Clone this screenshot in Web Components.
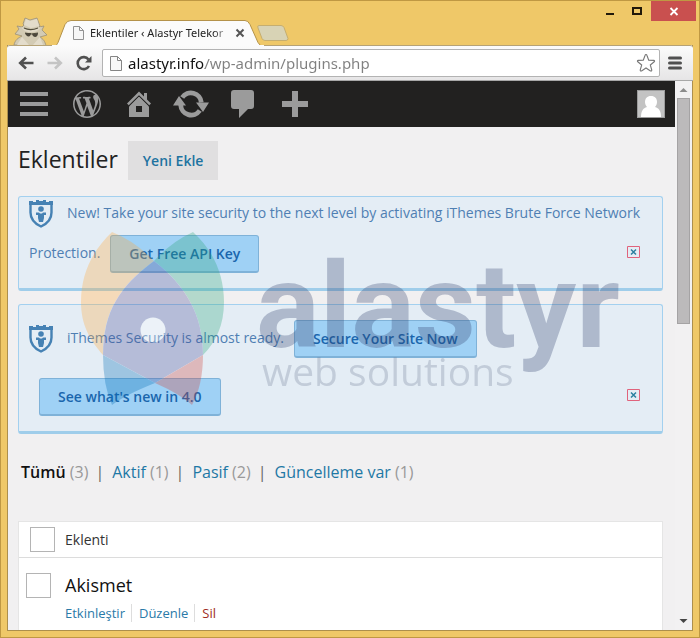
<!DOCTYPE html>
<html lang="tr">
<head>
<meta charset="utf-8">
<title>Eklentiler ‹ Alastyr Telekom</title>
<style>
html,body{margin:0;height:100%}
body{font-family:"Open Sans","Noto Sans",sans-serif;font-size:14px;color:#222;overflow:hidden}
</style>
</head>
<body>
<browser-window>
  <tab-strip slot="tabs" label="Eklentiler ‹ Alastyr Telekor"></tab-strip>
  <address-bar slot="toolbar" value="alastyr.info/wp-admin/plugins.php"></address-bar>
  <admin-bar></admin-bar>
  <page-heading action="Yeni Ekle">Eklentiler</page-heading>
  <notice-list>
    <security-notice>New! Take your site security to the next level by activating iThemes Brute Force Network Protection.<notice-button slot="actions">Get Free API Key</notice-button></security-notice>
    <security-notice>iThemes Security is almost ready.<notice-button slot="actions">Secure Your Site Now</notice-button><notice-button slot="actions">See what's new in 4.0</notice-button></security-notice>
  </notice-list>
  <status-filter></status-filter>
  <plugin-table></plugin-table>
</browser-window>

<script>
function define(name, html, setup) {
  const template = document.createElement('template');
  template.innerHTML = html;
  customElements.define(name, class extends HTMLElement {
    constructor() {
      super();
      this.attachShadow({mode: 'open'}).append(template.content.cloneNode(true));
    }
    connectedCallback() { if (setup) setup(this, this.shadowRoot); }
  });
}

define('browser-window', `
<style>
:host{display:flex;flex-direction:column;height:100vh;box-sizing:border-box;background:#efc868;border:1px solid #bf9843;padding:0 6px 6px}
.frame{flex:1;min-height:0;display:flex;flex-direction:column;border:1px solid #ac8f4d;border-top:0;background:#f1f0f1}
.view{flex:1;min-height:0;display:flex}
main{flex:1;min-width:0;overflow:hidden;position:relative}
</style>
<slot name="tabs"></slot>
<div class="frame">
  <slot name="toolbar"></slot>
  <div class="view"><main><slot></slot></main><scroll-track></scroll-track></div>
</div>`);

define('tab-strip', `
<style>
:host{display:flex;align-items:flex-end;height:44px;box-sizing:border-box}
.spy{width:38px;height:28px;margin-left:3px;flex:none}
.tab{position:relative;width:212px;height:26px;margin:0 0 -1px 4px;flex:none;z-index:1}
.shape{position:absolute;inset:0}
.in{position:relative;display:flex;align-items:center;height:26px;padding:0 18px 0 21px}
.title{flex:1;overflow:hidden;white-space:nowrap;font:11px "Noto Sans","Open Sans",sans-serif;color:#222;margin-left:6px;border:0;background:none;padding:0;text-align:left;line-height:24px;-webkit-mask:linear-gradient(90deg,#000 calc(100% - 16px),transparent)}
button{border:0;background:none;padding:0;display:block}
.x{width:12px;height:12px;margin-left:4px}
.new{width:32px;height:16px;margin:0 0 4px -7px}
.win{margin-left:auto;align-self:flex-start;display:flex;margin-right:-3px}
.win button{height:20px;width:27px}
.win .close{width:45px;background:#c9504f}
svg{display:block}
</style>
<svg class="spy" viewBox="0 0 38 28">
  <path d="M4 28c1-5 4-7 8-9L5 17l4-5-2-3 5 1 2-2-1-1 2-6 5 2 7-2 3 8-1 1 5-1-2 4 5 5-7 2c3 2 5 4 6 9z" fill="#d3cbb4" stroke="#9a917a" stroke-width=".8"/>
  <path d="M14 8l2-6 4 2 7-2 2 7-8 2z" fill="#e3dccb"/>
  <path d="M12 20l7 8H7zM30 20l-7 8h10z" fill="#e3dccb"/>
  <path d="M11 10c6 3 13 3 20 0-3 4-5 5-10 5s-8-2-10-5z" fill="#e0d9c7"/>
  <path d="M14 11c4 2 9 2 14 0M15 16l6 1 7-1" fill="none" stroke="#55503f" stroke-width="1.2"/>
  <path d="M15 16h6c0 5-5 4-6 0zM22 17l6-1c0 5-5 5-6 1z" fill="#4c473b"/>
</svg>
<div class="tab">
  <svg class="shape" width="212" height="26" viewBox="0 0 212 26">
    <path d="M0 26c4 0 5-2 6-4L13 4q2-4 6-4h174q3 0 5 4l8 18q2 4 6 4z" fill="#fbfbfb" transform="translate(0 .5)" stroke="#b4924a"/>
    <path d="M0 25h212v1H0z" fill="#fbfbfb"/>
  </svg>
  <div class="in">
    <svg width="11" height="14" viewBox="0 0 11 14"><path d="M.5.5h6l4 4v9H.5zM6.500.5v4h4" fill="#f6f6f6" stroke="#929292"/></svg>
    <button class="title"></button>
    <button class="x" aria-label="Kapat"><svg width="12" height="12"><path d="M2.500 2.500l7 7m0-7l-7 7" stroke="#555" stroke-width="2"/></svg></button>
  </div>
</div>
<button class="new" aria-label="Yeni sekme"><svg width="32" height="16"><path d="M2 .5h22q2 0 3 2l4 11q0 2-2 2H8q-2 0-3-2L1 3Q0 .5 2 .5z" fill="#d8d3b5" stroke="#c5ae70"/></svg></button>
<div class="win">
  <button aria-label="Küçült"><svg width="27" height="20"><path d="M9 12h8v2H9z" fill="#22190a"/></svg></button>
  <button aria-label="Büyüt"><svg width="27" height="20"><path d="M9 7h8v6H9z" fill="none" stroke="#22190a" stroke-width="2"/><path d="M8 6h10v2H8z" fill="#22190a"/></svg></button>
  <button class="close" aria-label="Pencereyi kapat"><svg width="45" height="20"><path d="M19.500 7l7 7m0-7l-7 7" stroke="#fff" stroke-width="1.800"/></svg></button>
</div>`, (el, root) => { root.querySelector('.title').textContent = el.getAttribute('label'); });

define('address-bar', `
<style>
:host{display:flex;align-items:center;height:36px;box-sizing:border-box;padding:0 9px 0 11px;background:linear-gradient(#fbfbfb,#e6e5e6);border-top:1px solid #b5a276;border-bottom:1px solid #a8a8a8;margin:0 -1px;border-radius:3px 3px 0 0}
button{border:0;padding:0;background:none;display:block;width:16px;height:16px;margin-right:13px}
.box{flex:1;display:flex;align-items:center;height:28px;box-sizing:border-box;border:1px solid #b3b3b3;border-radius:2px;background:#fff;padding:0 3px 0 7px;margin:0 8px 0 -3px}
input{flex:1;min-width:0;border:0;padding:0;margin:0 0 0 6px;outline:0;font:15px/24px "Noto Sans","Open Sans",sans-serif;color:transparent;background:linear-gradient(90deg,#111 77px,#808080 77px);-webkit-background-clip:text;background-clip:text}
.box button,.menu{margin:0}
.box button{width:20px;height:20px}
svg{display:block}
</style>
<button aria-label="Geri"><svg width="16" height="16"><path d="M15.500 8H2m6-5.500L2.200 8 8 13.500" fill="none" stroke="#505050" stroke-width="2.600"/></svg></button>
<button aria-label="İleri"><svg width="16" height="16"><path d="M.5 8H14M8 2.500L13.800 8 8 13.500" fill="none" stroke="#c4c4c4" stroke-width="2.600"/></svg></button>
<button aria-label="Yenile"><svg width="16" height="16"><path d="M13 11a6 6 0 1 1-.5-6.500" fill="none" stroke="#505050" stroke-width="2.600"/><path d="M15.500 1v6.500H9z" fill="#505050"/></svg></button>
<div class="box">
  <svg width="12" height="15"><path d="M.5.5h7l4 4v10H.5zM7.500.5v4h4" fill="#f8f8f8" stroke="#858585"/></svg>
  <input aria-label="Adres" spellcheck="false">
  <button aria-label="Yer imi"><svg width="20" height="20" viewBox="0 0 20 20"><path d="M10 1.500q.7 0 1 1l1.700 4.700 5 .2q1.500.3.500 1.400L14.300 12l1.500 5q0 1.500-1.300.9L10 15l-4.500 2.900q-1.300.6-1.300-.9l1.500-5-3.900-3.200q-1-1.100.5-1.400l5-.2L9 2.500q.3-1 1-1z" fill="#fff" stroke="#777" stroke-width="1.100"/></svg></button>
</div>
<button class="menu" aria-label="Menü"><svg width="14" height="16"><path d="M1.500 3h11M1.500 8h11M1.500 13h11" stroke="#505050" stroke-width="3" stroke-linecap="round"/></svg></button>`,
(el, root) => { root.querySelector('input').value = el.getAttribute('value'); });

define('scroll-track', `
<style>
:host{display:flex;flex-direction:column;width:17px;background:#f2f1f2;padding-top:5px;box-sizing:border-box;align-items:center}
.thumb{box-sizing:border-box;width:13px;height:226px;background:#bcbabb;border:1px solid #a5a3a4;margin-top:5px}
.end{margin-top:auto;margin-bottom:6px}
svg{display:block}
</style>
<svg width="9" height="7"><path d="M.5 6L4.500 2l4 4z" fill="#8c8c8c"/></svg>
<div class="thumb"></div>
<svg class="end" width="9" height="7"><path d="M.5 2h8l-4 4z" fill="#444"/></svg>`);

define('admin-bar', `
<style>
:host{display:flex;align-items:center;height:46px;padding:0 10px 0 1px;background:#222120}
button{border:0;padding:0;background:none;width:52px;height:46px;display:flex;align-items:center;justify-content:center;color:#9b9b9b}
button:first-of-type{width:50px;margin-right:2px}
.me{margin-left:auto;width:28px}
svg{display:block;fill:currentColor}
</style>
<button aria-label="Menü"><svg width="28" height="24"><path d="M0 0h28v4H0zM0 10h28v4H0zM0 20h28v4H0z"/></svg></button>
<button aria-label="WordPress"><svg width="28" height="28" viewBox="0 0 20 20"><path d="M20 10c0-5.510-4.490-10-10-10C4.480 0 0 4.490 0 10c0 5.520 4.480 10 10 10 5.510 0 10-4.480 10-10zM7.780 15.370L4.370 6.220c.55-.02 1.170-.08 1.170-.08.5-.06.44-1.130-.06-1.110 0 0-1.450.11-2.370.11-.18 0-.37 0-.58-.01C4.120 2.690 6.870 1.110 10 1.110c2.330 0 4.450.87 6.050 2.340-.68-.11-1.650.39-1.650 1.580 0 .74.45 1.360.9 2.100.35.61.55 1.360.55 2.460 0 1.490-1.400 5-1.400 5l-3.030-8.370c.54-.02.82-.17.82-.17.5-.05.44-1.250-.06-1.220 0 0-1.440.12-2.380.12-.87 0-2.330-.12-2.330-.12-.5-.03-.56 1.200-.06 1.220l.92.08 1.260 3.410zM17.410 10c.24-.64.74-1.870.43-4.250.7 1.290 1.050 2.710 1.050 4.250 0 3.290-1.730 6.240-4.400 7.780.97-2.590 1.940-5.200 2.920-7.780zM6.100 18.090C3.120 16.650 1.110 13.530 1.110 10c0-1.300.23-2.480.72-3.590C3.250 10.300 4.670 14.200 6.100 18.090zm4.030-6.630l2.580 6.980c-.86.29-1.760.45-2.710.45-.79 0-1.570-.11-2.290-.33.81-2.380 1.620-4.740 2.420-7.100z"/></svg></button>
<button aria-label="Site"><svg width="24" height="26" viewBox="0 0 24 26"><path d="M0 12.500L12 .5l5 5V2h3v6.500l4 4-2 2-10-10-10 10z"/><path d="M2 15.500l10-10 10 10V26H2z"/><path d="M9 15h6v6H9z" fill="#222120"/><path d="M1.800 14.800l10.200-10 10.200 10" fill="none" stroke="#222120" stroke-width="1"/></svg></button>
<button aria-label="Güncellemeler"><svg width="36" height="28" viewBox="0 0 36 28"><path d="M9.200 7.500A10.500 10.500 0 0 1 28.300 12.500M26.800 20.500A10.500 10.500 0 0 1 7.700 15" fill="none" stroke="#9b9b9b" stroke-width="4.800"/><path d="M0 15.500L6 6l7 9.500zM23 12.500h13L30 22z"/></svg></button>
<button aria-label="Yorumlar"><svg width="24" height="28" viewBox="0 0 24 28"><path d="M3 0h17q3 0 3 3v13q0 3-3 3h-3l-9 9v-9H3q-3 0-3-3V3q0-3 3-3z"/></svg></button>
<button aria-label="Yeni"><svg width="26" height="26"><path d="M10 0h6v10h10v6H16v10h-6V16H0v-6h10z"/></svg></button>
<button class="me" aria-label="Hesabım"><svg width="28" height="28"><path d="M0 0h28v28H0z" fill="#9c9c9c"/><path d="M1 1h26v26H1z" fill="#c3c3c3"/><path d="M14 6c4 0 6 2.600 6 6 0 2-1 4-2 5 4 1 6 4 6 10H4c0-6 2-9 6-10-1-1-2-3-2-5 0-3.400 2-6 6-6z" fill="#fff"/></svg></button>`);

define('page-heading', `
<style>
:host{display:flex;align-items:center;padding:14px 10px 16px}
h1{margin:0 0 3px;font-size:23px;line-height:36px;font-weight:400;color:#222}
button{margin-left:10px;border:0;background:#e0dfe0;color:#1e73a0;font:600 14px "Open Sans",sans-serif;height:39px;padding:0 15px}
</style><h1><slot></slot></h1><button></button>`,
(el, root) => { root.querySelector('button').textContent = el.getAttribute('action'); });

define('notice-list', `
<style>
:host{display:grid;gap:13px;position:relative;padding:0 12px 0 10px}
.mark{position:absolute;left:70px;top:32px;pointer-events:none}
</style>
<slot></slot><brand-mark class="mark"></brand-mark>`);

define('brand-mark', `
<style>:host{display:block;opacity:.3}svg{display:block}</style>
<svg width="550" height="180" viewBox="78 228 550 180">
  <path d="M112 232Q135 241 154 261C120 286 103 311 103 355C90 340 81 325 81 302C81 273 93 250 112 232z" fill="#ffa93a"/>
  <path d="M193 232Q171 242 154 261C185 285 203 314 203 355C216 342 224 325 224 302C224 273 212 249 193 232z" fill="#2ba679"/>
  <path d="M154 261C185 285 203 314 203 355L155 383L103 355C103 311 120 286 154 261z" fill="#4a4f98"/>
  <path d="M103 355L155 383Q125 395 112 405Q103 385 103 355z" fill="#006cb4"/>
  <path d="M203 355L155 383Q180 394 192 405Q203 385 203 355z" fill="#d04038"/>
  <circle cx="153" cy="330" r="12.500" fill="#fff"/>
  <text x="256" y="347" font-family="Roboto,sans-serif" font-weight="700" font-size="119" fill="#33436f">alastyr</text>
  <text x="262" y="386" font-family="Open Sans,sans-serif" font-size="39" fill="#75819a">web solutions</text>
</svg>`);

define('security-notice', `
<style>
:host{display:block;box-sizing:border-box;border:1px solid #a3d0ef;border-bottom:3px solid #9fcdea;border-radius:3px;background:#e4edf5;padding:5px 10px;line-height:22px;color:#4f7fb3}
.icon{display:inline-block;vertical-align:middle;margin:-3px 14px -3px 0}
.x{float:right;margin:21px 12px 0 0;width:13px;height:12px;border:0;padding:0;background:none}
.x svg{display:block}
</style>
<svg class="icon" width="24" height="28" viewBox="0 0 24 28"><path d="M1.500 3.500h21v9c0 7-4 11-10.500 14C5.500 23.500 1.500 19.500 1.500 12.500z" fill="none" stroke="#4682b4" stroke-width="2.400"/><path d="M0 1h4v1h3V0h3v1h4V0h3v2h3V1h4v4H0z" fill="#4682b4"/><circle cx="12" cy="9" r="2.800" fill="#4682b4"/><path d="M7 12.500h3l1 1h2l1-1h3v2.500h-2V18l-1 4h-4l-1-4v-3H7z" fill="#4682b4"/></svg><slot></slot><slot name="actions"></slot><button class="x" aria-label="Kapat"><svg width="13" height="12"><path d="M.5.5h12v11H.5z" fill="none" stroke="#e0637c"/><path d="M4 3.500l5 5m0-5l-5 5" stroke="#2a80a0" stroke-width="1.500"/></svg></button>`);

define('notice-button', `
<style>
:host{display:inline-block;vertical-align:middle;margin:10px 0 10px 10px}
button{box-sizing:border-box;height:38px;padding:0 18px;border:1px solid #7fb2d8;border-bottom-width:2px;border-radius:3px;background:#9fd1f5;color:#1a66ad;font:600 14px "Open Sans",sans-serif;display:block;white-space:nowrap}
</style><button><slot></slot></button>`);

define('status-filter', `
<style>
:host{display:flex;padding:26px 13px 0;font-size:16px;line-height:24px;color:#555}
a{color:#1e78a5;text-decoration:none}
.on{color:#111;font-weight:600}
i{font-style:normal;color:#999}
b{font-weight:400;margin:0 8px 0 7px;color:#666}
</style>
<span><a class="on" href="#all">Tümü</a> <i>(3)</i></span><b>|</b><span><a href="#active">Aktif</a> <i>(1)</i></span><b>|</b><span><a href="#inactive">Pasif</a> <i>(2)</i></span><b>|</b><span><a href="#upgrade">Güncelleme var</a> <i>(1)</i></span>`);

define('plugin-table', `
<style>
:host{display:block;padding:37px 12px 0 10px}
table{width:100%;border-collapse:separate;border-spacing:0;background:#fff;border:1px solid #e5e5e5;border-bottom:0}
th,td{padding:0;text-align:left;font-weight:400;vertical-align:top}
thead th{height:35px;border-bottom:1px solid #dcdcdc;vertical-align:middle;color:#333}
.c{width:46px}
input{appearance:none;box-sizing:border-box;display:block;width:25px;height:25px;margin:0 0 0 11px;border:1px solid #b4b4b4;background:#fff}
tbody input{margin:15px 0 0 7px}
strong{display:block;font-weight:400;font-size:18px;line-height:24px;margin-top:15px;color:#111}
.links{display:flex;font-size:13px;line-height:18px;margin:7px 0 80px}
a{color:#2a7aa8;text-decoration:none}
a+a{margin-left:6px;padding-left:7px;border-left:1px solid #ddd}
.del{color:#a02c22}
</style>
<table>
<thead><tr><th class="c"><input type="checkbox" aria-label="Tümünü seç"></th><th>Eklenti</th></tr></thead>
<tbody><tr><td class="c"><input type="checkbox" id="ak"></td><td><strong><label for="ak">Akismet</label></strong><div class="links"><a href="#on">Etkinleştir</a><a href="#edit">Düzenle</a><a class="del" href="#del">Sil</a></div></td></tr></tbody>
</table>`);
</script>
</body>
</html>
